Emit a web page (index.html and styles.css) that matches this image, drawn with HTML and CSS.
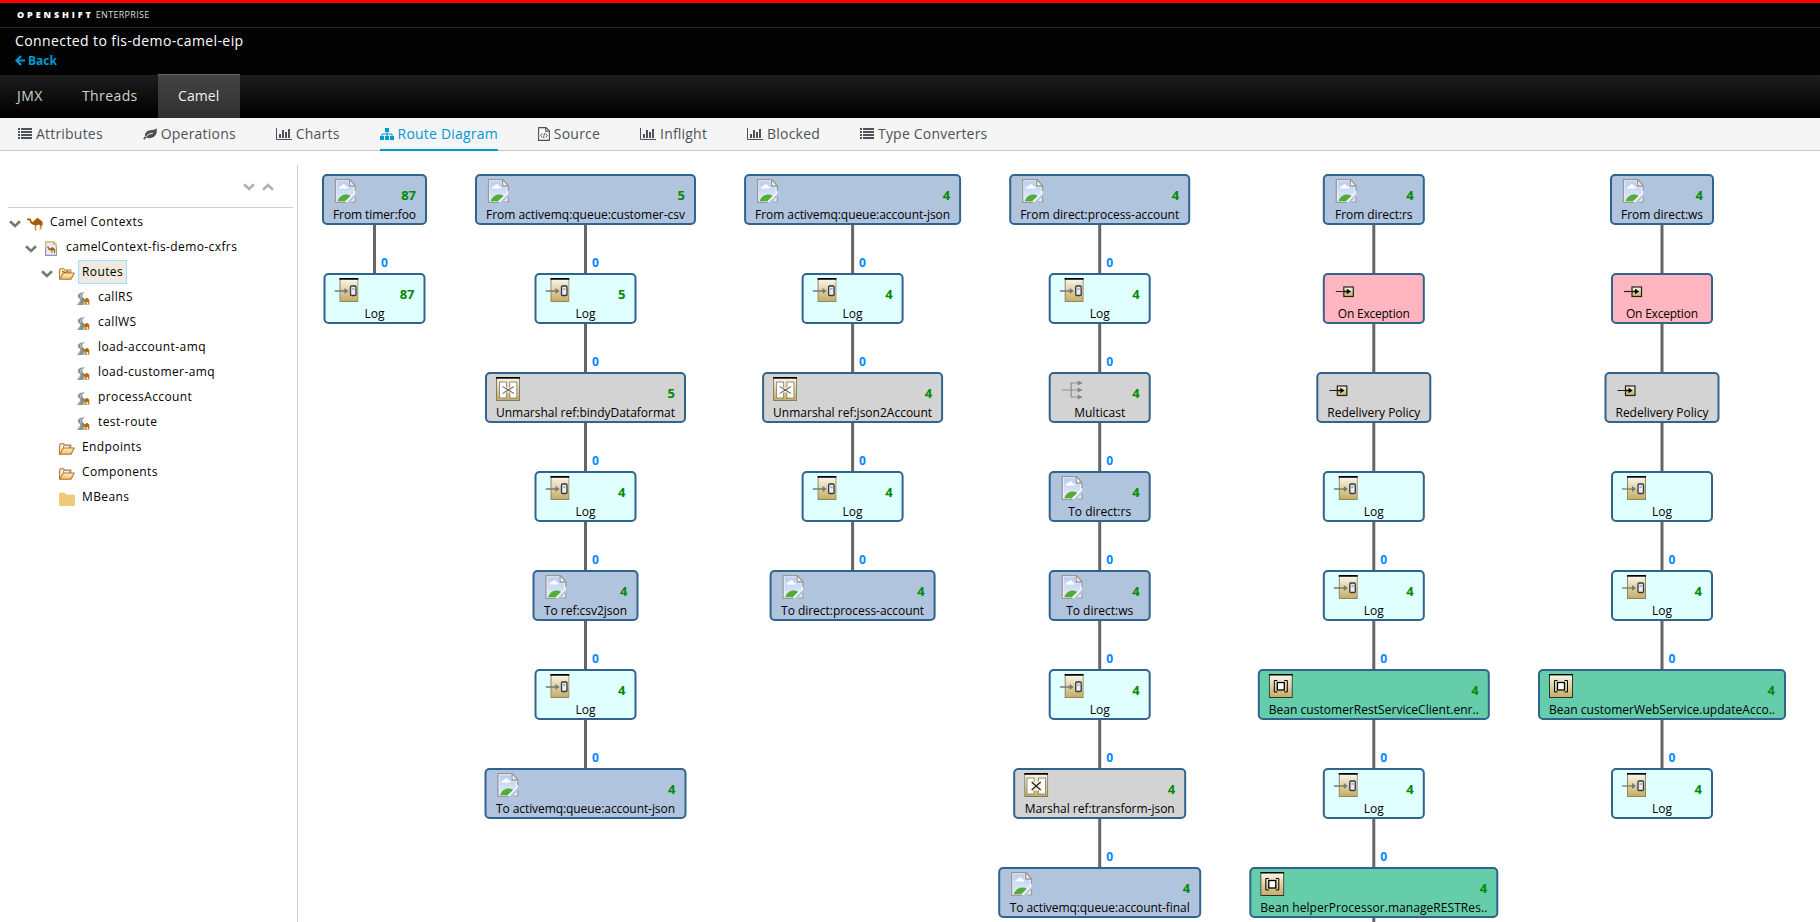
FILE: index.html
```html
<!DOCTYPE html>
<html lang="en">
<head>
<meta charset="utf-8">
<title>Camel Route Diagram</title>
<link rel="stylesheet" href="styles.css">
</head>
<body>
<svg class="defs" width="0" height="0" aria-hidden="true">
  <defs>
    <linearGradient id="gold" x1="0" y1="0" x2="0" y2="1"><stop offset="0" stop-color="#fbf8ee"/><stop offset="1" stop-color="#c5ac62"/></linearGradient>
    <linearGradient id="sky" x1="0" y1="0" x2="0" y2="1"><stop offset="0" stop-color="#b9cdf2"/><stop offset="1" stop-color="#e3ecfb"/></linearGradient>
    <linearGradient id="fold" x1="0" y1="0" x2="0" y2="1"><stop offset="0" stop-color="#fff0c4"/><stop offset="1" stop-color="#f0bd62"/></linearGradient>
    <symbol id="i-broken" viewBox="0 0 24 24">
      <path d="M2.500 .7H17l5.300 6v8L14 23.300H2.500z" fill="#f2f4f9"/>
      <path d="M4 2.200h11.500v6h5v6L12 22H4z" fill="url(#sky)"/>
      <path d="M6 9.500c0-2 1.500-2.500 2.500-2C9 4.500 12.500 4.500 13 7.500c1.800-.2 2.300 1 2 2z" fill="#fff"/>
      <path d="M4.500 22.300c1.500-4.500 5-7 9-6.800 2.500.2 4 1.500 4 1.500l-5.500 5.300z" fill="#53ac35"/>
      <path d="M22.300 12V6.700L17 .7H2.500v22.600H13M16.500 1v6h5.800" fill="none" stroke="#999" stroke-width="1.300"/>
      <path d="M22.600 17v6.300h-5.800z" fill="#e6eaf2"/><path d="M22.300 17.500v5.500h-5" fill="none" stroke="#999" stroke-width="1.200"/>
    </symbol>
    <symbol id="i-log" viewBox="0 0 24 24">
      <rect x="5.500" y=".5" width="18" height="23" fill="url(#gold)" stroke="#8f8663"/>
      <path d="M5 .8h19" stroke="#000" stroke-width="1.800"/>
      <path d="M0 13h11" stroke="#777" stroke-width="1.300"/><path d="M10 10l4 3-4 3z" fill="#777"/>
      <rect x="16" y="8" width="5.500" height="9.500" rx="1" fill="#e8ecf6" stroke="#383838" stroke-width="1.300"/>
      <path d="M17.500 11h2.500" stroke="#7384b4"/>
    </symbol>
    <symbol id="i-unmarshal" viewBox="0 0 24 24">
      <rect x=".5" y=".5" width="23" height="23" fill="url(#gold)" stroke="#857c60"/><path d="M0 .8h24" stroke="#000" stroke-width="1.800"/>
      <rect x="3.500" y="5" width="7" height="16" fill="#fff" stroke="#8a8470" stroke-width=".9"/>
      <rect x="13.800" y="5" width="7" height="16" fill="#fff" stroke="#8a8470" stroke-width=".9"/>
      <path d="M9 10.500h6.500v5H9z" fill="#f5eed6"/>
      <path d="M6.500 9.500l11.500 7M18 9.500l-11.500 7" stroke="#444" stroke-width=".9"/>
    </symbol>
    <symbol id="i-marshal" viewBox="0 0 24 24">
      <rect x=".5" y=".5" width="23" height="23" fill="url(#gold)" stroke="#857c60"/><path d="M0 .8h24" stroke="#000" stroke-width="1.800"/>
      <rect x="2.800" y="5" width="7" height="16" fill="#fff" stroke="#8a8470" stroke-width=".9"/>
      <rect x="14.300" y="5" width="7" height="16" fill="#fff" stroke="#8a8470" stroke-width=".9"/>
      <path d="M7 8.500h10v9H7z" fill="#f8f3e2"/>
      <path d="M7.500 9l9 8M16.500 9l-9 8" stroke="#222" stroke-width="1.300"/>
    </symbol>
    <symbol id="i-multicast" viewBox="0 0 24 24">
      <path d="M2 13h18M11.500 6v14M11 6h8M11 20h8" fill="none" stroke="#8f8f8f" stroke-width="1.200"/>
      <path d="M18 3.500l5 2.500-5 2.500zM18 10.500l5 2.500-5 2.500zM18 17.500l5 2.500-5 2.500z" fill="#858585"/>
    </symbol>
    <symbol id="i-generic" viewBox="0 0 24 24">
      <path d="M2 13.500h9" stroke="#222" stroke-width="1.200"/>
      <rect x="10" y="9" width="9.500" height="9.500" fill="url(#gold)" stroke="#222" stroke-width="1.200"/>
      <path d="M10 13.500h4" stroke="#111" stroke-width="1.300"/><path d="M13 10.700l4.300 2.800-4.300 2.800z" fill="#000"/>
    </symbol>
    <symbol id="i-bean" viewBox="0 0 24 24">
      <rect x=".5" y=".5" width="23" height="23" fill="url(#gold)" stroke="#27352c"/><path d="M0 .7h24" stroke="#000" stroke-width="1.400"/>
      <rect x="8.500" y="8.500" width="7" height="7.500" fill="#fff" stroke="#000" stroke-width="1.300"/>
      <path d="M8.500 6.500h-3v11.500h3M15.500 6.500h3v11.500h-3" fill="none" stroke="#000" stroke-width="1"/>
    </symbol>
    <symbol id="i-camel" viewBox="0 0 16 14">
      <path d="M0 1.800L2.200 1.200l2 1 .3 2L6 5l1-1.500L8.300 2.700 9.200 2l1.300-1.500L12 2l1.800 1.200L15.600 5v4.500l-.8-2-.4 2.200v2.800h-.9L13.300 9l-1-1.200-2.500.2-.6 1.200v4.300h-.9V8.500L5 7.200 3.200 5.800 2.700 3.500 0 3z" fill="#a45c08"/>
      <path d="M8 9v3M12.900 9v4" stroke="#d89e50" stroke-width=".6"/>
    </symbol>
    <symbol id="i-context" viewBox="0 0 12 15">
      <path d="M.6.6h7.600l3.200 3.200v10.600H.6z" fill="#e9ebf6" stroke="#9a95a1" stroke-width="1.200"/>
      <path d="M.6 6V.6h7.600l3.200 3.200V6" fill="none" stroke="#dcbd6f" stroke-width="1.200"/><path d="M8 .6v3.400h3.400z" fill="#dcbd6f"/>
      <path d="M1.500 5.500h2l1 1.800 1 .3L7.300 6l2.700 2v4H9V9.500L7.500 9v3h-1V9.500L3.500 9 3 7z" fill="#a45c08"/>
    </symbol>
    <symbol id="i-folder-open" viewBox="0 0 16 12">
      <path d="M.6 11.200V2.200l1-1.500h3l1 1.300h6.200v3" fill="#fff2cf" stroke="#b0762a" stroke-width="1.100"/>
      <path d="M4.500 5V2.500h6V5" fill="#f1f1ef" stroke="#8c8a86" stroke-width=".8"/>
      <path d="M.8 11.200L4.300 5h11L12 11.200z" fill="url(#fold)" stroke="#b0762a" stroke-width="1.100" stroke-linejoin="round"/>
    </symbol>
    <symbol id="i-folder-routes" viewBox="0 0 16 12">
      <path d="M.6 11.200V2.200l1-1.500h3l1 1.300h6.200v3" fill="#fff2cf" stroke="#b0762a" stroke-width="1.100"/>
      <path d="M3 3.500l2 .3 1.500 1 2-1.500 2 1.500" fill="none" stroke="#b0660c" stroke-width="1.400"/>
      <path d="M.8 11.200L4.300 5h11L12 11.200z" fill="url(#fold)" stroke="#b0762a" stroke-width="1.100" stroke-linejoin="round"/>
    </symbol>
    <symbol id="i-route" viewBox="0 0 13 13">
      <path d="M0 13L4 7.500 7 8l5 5z" fill="#d0c496"/>
      <path d="M8.500 .2L4 .8C.6 2.500.4 5 3.500 7 4.700 8.500 3.500 10.500 1.500 13H6c2.500-3 2.500-5.500.5-7.500C5.300 4 5.500 2 8.500.2z" fill="#869392"/>
      <path d="M6.200 1C3 3 4 4.500 5 6.500" fill="none" stroke="#dfe6e5" stroke-width=".7"/>
      <path d="M5 6l1.700.3L8 7.500l1-.8 1.500-1 2.300 2.100v5h-.9l-.4-2.800-1.500.2-.2 2.600H9V10L7 9l-.5-1.700z" fill="#b2690f"/>
    </symbol>
    <symbol id="i-chev" viewBox="0 0 12 8"><path d="M1 1.300L6 6l5-4.700" fill="none" stroke="currentColor" stroke-width="2.600"/></symbol>
    <symbol id="i-list" viewBox="0 0 14 11"><path d="M0 1h2M0 4h2M0 7h2M0 10h2M3 1h11M3 4h11M3 7h11M3 10h11" stroke="currentColor" stroke-width="2"/></symbol>
    <symbol id="i-leaf" viewBox="0 0 14 12"><path d="M13.600.3c.9 4-.6 8.700-5.600 9.700-2 .4-3.500-.2-4.500-.5L1.300 11.700.2 10.500 2 8.500C1.500 5 4 2.600 7 2.200c2.500-.3 5.200.1 6.600-1.900z" fill="currentColor"/><path d="M2.700 9C4.500 6.700 6.800 5.500 9.800 5.200" fill="none" stroke="#f6f6f6" stroke-width="1"/></symbol>
    <symbol id="i-chart" viewBox="0 0 16 12"><path d="M.5 0v11.500H16" fill="none" stroke="currentColor"/><path d="M4 6v4M7 2v8M10 4v6M13 1v9" stroke="currentColor" stroke-width="2"/></symbol>
    <symbol id="i-sitemap" viewBox="0 0 14 12"><path d="M5 0h4v4H5zM0 8h4v4H0zM5 8h4v4H5zM10 8h4v4h-4z" fill="currentColor"/><path d="M7 4v4M2 8V6h10v2" fill="none" stroke="currentColor"/></symbol>
    <symbol id="i-source" viewBox="0 0 12 14"><path d="M.6.6h7.400L11.400 4v9.400H.6zM7.800.6v3.600h3.600" fill="none" stroke="currentColor" stroke-width="1.100"/><path d="M4.300 6.500L2.700 8.500l1.600 2M7.700 6.500l1.600 2-1.600 2M6.500 6l-1 5" fill="none" stroke="currentColor" stroke-width=".9"/></symbol>
    <symbol id="i-back" viewBox="0 0 10 11"><path d="M6 1L1.500 5.500 6 10M2 5.500h8" fill="none" stroke="currentColor" stroke-width="2.200"/></symbol>
  </defs>
</svg>

<header class="masthead">
  <div class="brand"><b>OPENSHIFT</b><span>ENTERPRISE</span></div>
  <div class="connection">
    <div class="connected">Connected to fis-demo-camel-eip</div>
    <a class="back"><svg width="10" height="11"><use href="#i-back"/></svg><span>Back</span></a>
  </div>
</header>
<nav class="tabs">
  <a class="tab">JMX</a><a class="tab threads">Threads</a><a class="tab active">Camel</a>
</nav>
<nav class="subnav">
  <a class="sub"><svg width="14" height="11"><use href="#i-list"/></svg><span>Attributes</span></a>
  <a class="sub"><svg width="14" height="12"><use href="#i-leaf"/></svg><span>Operations</span></a>
  <a class="sub"><svg width="16" height="12"><use href="#i-chart"/></svg><span>Charts</span></a>
  <a class="sub current"><svg width="14" height="12"><use href="#i-sitemap"/></svg><span>Route Diagram</span></a>
  <a class="sub"><svg width="12" height="14"><use href="#i-source"/></svg><span>Source</span></a>
  <a class="sub"><svg width="16" height="12"><use href="#i-chart"/></svg><span>Inflight</span></a>
  <a class="sub"><svg width="16" height="12"><use href="#i-chart"/></svg><span>Blocked</span></a>
  <a class="sub"><svg width="14" height="11"><use href="#i-list"/></svg><span>Type Converters</span></a>
</nav>

<div class="workspace">
  <aside class="sidebar">
    <div class="tree-tools"><svg width="12" height="8"><use href="#i-chev"/></svg><svg class="up" width="12" height="8"><use href="#i-chev"/></svg></div>
    <ul class="tree">
      <li class="l0"><svg class="chev" width="12" height="8"><use href="#i-chev"/></svg><svg class="ico" width="16" height="14"><use href="#i-camel"/></svg><span>Camel Contexts</span></li>
      <li class="l1"><svg class="chev" width="12" height="8"><use href="#i-chev"/></svg><svg class="ico" width="16" height="15"><use href="#i-context"/></svg><span>camelContext-fis-demo-cxfrs</span></li>
      <li class="l2"><svg class="chev" width="12" height="8"><use href="#i-chev"/></svg><svg class="ico" width="16" height="12"><use href="#i-folder-routes"/></svg><span class="selected">Routes</span></li>
      <li class="l3"><i class="chev"></i><svg class="ico" width="16" height="13"><use href="#i-route"/></svg><span>callRS</span></li>
      <li class="l3"><i class="chev"></i><svg class="ico" width="16" height="13"><use href="#i-route"/></svg><span>callWS</span></li>
      <li class="l3"><i class="chev"></i><svg class="ico" width="16" height="13"><use href="#i-route"/></svg><span>load-account-amq</span></li>
      <li class="l3"><i class="chev"></i><svg class="ico" width="16" height="13"><use href="#i-route"/></svg><span>load-customer-amq</span></li>
      <li class="l3"><i class="chev"></i><svg class="ico" width="16" height="13"><use href="#i-route"/></svg><span>processAccount</span></li>
      <li class="l3"><i class="chev"></i><svg class="ico" width="16" height="13"><use href="#i-route"/></svg><span>test-route</span></li>
      <li class="l2"><i class="chev"></i><svg class="ico" width="16" height="12"><use href="#i-folder-open"/></svg><span>Endpoints</span></li>
      <li class="l2"><i class="chev"></i><svg class="ico" width="16" height="12"><use href="#i-folder-open"/></svg><span>Components</span></li>
      <li class="l2"><i class="chev"></i><svg class="ico" width="16" height="14" viewBox="0 0 16 14"><path d="M0 2.500Q0 .5 2 .5h3.500L7 2.500h7.500q1.500 0 1.500 1.500v8.500q0 1.500-1.500 1.500H1.500Q0 14 0 12.500z" fill="#eec97c"/></svg><span>MBeans</span></li>
    </ul>
  </aside>
  <main class="canvas" id="canvas"></main>
</div>
<script src="diagram.js"></script>
</body>
</html>
```
FILE: diagram.js
```js
// Each route: centre x, then nodes [type, icon, width, label, label width, count].
// A trailing "plain" marks a node whose incoming edge carries no inflight count.
const routes = [
  { x: 374.5, nodes: [
    ['endpoint', 'broken', 105, 'From timer:foo', 83, '87'],
    ['log', 'log', 102, 'Log', 20, '87'] ] },
  { x: 585.5, nodes: [
    ['endpoint', 'broken', 221, 'From activemq:queue:customer-csv', 199, '5'],
    ['log', 'log', 102, 'Log', 20, '5'],
    ['step', 'unmarshal', 201, 'Unmarshal ref:bindyDataformat', 179, '5'],
    ['log', 'log', 102, 'Log', 20, '4'],
    ['endpoint', 'broken', 106, 'To ref:csv2json', 83, '4'],
    ['log', 'log', 102, 'Log', 20, '4'],
    ['endpoint', 'broken', 202, 'To activemq:queue:account-json', 179, '4'] ] },
  { x: 852.6, nodes: [
    ['endpoint', 'broken', 217, 'From activemq:queue:account-json', 195, '4'],
    ['log', 'log', 102, 'Log', 20, '4'],
    ['step', 'unmarshal', 181, 'Unmarshal ref:json2Account', 159, '4'],
    ['log', 'log', 102, 'Log', 20, '4'],
    ['endpoint', 'broken', 166, 'To direct:process-account', 143, '4'] ] },
  { x: 1099.7, nodes: [
    ['endpoint', 'broken', 181, 'From direct:process-account', 159, '4'],
    ['log', 'log', 102, 'Log', 20, '4'],
    ['step', 'multicast', 102, 'Multicast', 51, '4'],
    ['endpoint', 'broken', 102, 'To direct:rs', 63, '4'],
    ['endpoint', 'broken', 102, 'To direct:ws', 67, '4'],
    ['log', 'log', 102, 'Log', 20, '4'],
    ['step', 'marshal', 173, 'Marshal ref:transform-json', 150, '4'],
    ['endpoint', 'broken', 203, 'To activemq:queue:account-final', 180, '4'] ] },
  { x: 1373.8, continues: true, nodes: [
    ['endpoint', 'broken', 102, 'From direct:rs', 77.5, '4'],
    ['exception', 'generic', 102, 'On Exception', 72, '', 'plain'],
    ['step', 'generic', 115, 'Redelivery Policy', 93, '', 'plain'],
    ['log', 'log', 102, 'Log', 20, '', 'plain'],
    ['log', 'log', 102, 'Log', 20, '4'],
    ['bean', 'bean', 232, 'Bean customerRestServiceClient.enr..', 210, '4'],
    ['log', 'log', 102, 'Log', 20, '4'],
    ['bean', 'bean', 249, 'Bean helperProcessor.manageRESTRes..', 227, '4'] ] },
  { x: 1662, nodes: [
    ['endpoint', 'broken', 104, 'From direct:ws', 82, '4'],
    ['exception', 'generic', 102, 'On Exception', 72, '', 'plain'],
    ['step', 'generic', 115, 'Redelivery Policy', 93, '', 'plain'],
    ['log', 'log', 102, 'Log', 20, '', 'plain'],
    ['log', 'log', 102, 'Log', 20, '4'],
    ['bean', 'bean', 248, 'Bean customerWebService.updateAcco..', 226, '4'],
    ['log', 'log', 102, 'Log', 20, '4'] ] }
];
const TOP = 174, HEIGHT = 51, PITCH = 99;
let out = '<svg class="diagram" width="1522" height="771" viewBox="298 151 1522 771">';
for (const route of routes) {
  const rows = route.nodes.length;
  const end = TOP + (rows - 1) * PITCH + (route.continues ? PITCH : 10);
  out += `<line class="edge" x1="${route.x}" x2="${route.x}" y1="${TOP + 20}" y2="${end}"/>`;
  route.nodes.forEach(([type, icon, w, label, labelWidth, count, plain], row) => {
    const y = TOP + row * PITCH;
    if (row > 0 && !plain) out += `<text class="inflight" x="${route.x + 6.5}" y="${y - 6}">0</text>`;
    out += `<g transform="translate(${route.x - w / 2} ${y})">
      <rect class="node ${type}" x="1" y="1" width="${w - 2}" height="${HEIGHT - 2}" rx="4"/>
      <use href="#i-${icon}" x="11" y="5" width="24" height="24"/>
      <text class="count" x="${w - 11}" y="26">${count}</text>
      <text class="label" x="${w / 2}" y="45" textLength="${labelWidth}">${label}</text></g>`;
  });
}
document.getElementById('canvas').innerHTML = out + '</svg>';
```
FILE: styles.css
```css
* { box-sizing: border-box; }
body { margin: 0; height: 922px; overflow: hidden; background: #fff; color: #000; font-family: "Open Sans", "Noto Sans", sans-serif; font-size: 12px; }
.defs { display: block; position: absolute; }
.masthead { height: 75px; border-top: 3px solid #f00; background: #030303; color: #fff; }
.brand { height: 25px; border-bottom: 1px solid #292929; padding-left: 17px; display: flex; gap: 2px; font-size: 9px; line-height: 23px; }
.brand b { font-weight: 800; letter-spacing: 2.9px; }
.brand span { letter-spacing: .3px; color: #ddd; }
.connection { padding: 2px 0 0 15px; }
.connected { font-size: 14px; line-height: 22px; letter-spacing: .4px; }
.back { display: flex; align-items: center; gap: 3px; color: #0099d3; font-weight: 700; line-height: 17px; }
.tabs { height: 43px; display: flex; background: linear-gradient(#1d1d1d, #000 97%); }
.tab { width: 62px; padding-left: 17px; font-size: 14px; line-height: 42px; letter-spacing: .4px; color: #d1d1d1; }
.threads { width: 96px; padding-left: 20px; }
.tab.active { width: 82px; height: 44px; margin-top: -1px; padding-left: 20px; border-top: 1px solid #666; background: linear-gradient(#434343, #303030); color: #f1f1f1; letter-spacing: .1px; }
.subnav { height: 33px; padding-left: 18px; display: flex; gap: 40px; background: #f5f5f5; border-bottom: 1px solid #c9c9c9; color: #4d5258; }
.sub { height: 33px; padding-bottom: 2px; display: flex; align-items: center; gap: 4px; font-size: 14px; letter-spacing: .2px; white-space: nowrap; }
.sub span { line-height: 29px; padding-bottom: 1px; }
.current { color: #0099d3; border-bottom: 2px solid #0099d3; padding-bottom: 0; }
.workspace { height: 771px; display: flex; }
.sidebar { width: 298px; flex: none; margin-top: 14px; border-right: 1px solid #d1d1d1; padding-left: 8px; }
.tree-tools { width: 285px; height: 43px; padding: 18px 19px 0 0; border-bottom: 1px solid #d1d1d1; display: flex; justify-content: flex-end; gap: 7px; color: #b0b0b0; }
.up { transform: scaleY(-1); }
.tree { list-style: none; margin: 1px 0 0; padding: 0; }
.tree li { height: 25px; display: flex; align-items: center; letter-spacing: .4px; white-space: nowrap; }
.tree .chev { width: 12px; margin: 5px 7px 0 1px; color: #6d8070; flex: none; }
.tree .ico { margin: 4px 3px 0 -1px; flex: none; }
.tree span { height: 24px; line-height: 22px; padding: 0 3px; border: 1px solid transparent; }
.tree .selected { border-color: #99defd; background: #eeeade; }
.l1 { padding-left: 16px; }
.l2 { padding-left: 32px; }
.l3 { padding-left: 48px; }
.canvas { flex: none; width: 1522px; height: 771px; overflow: hidden; }
.diagram { display: block; }
.edge { stroke: #666; stroke-width: 3px; }
.node { stroke: #31648c; stroke-width: 2px; }
.endpoint { fill: #b0c4de; }
.log { fill: #e0ffff; }
.step { fill: #d3d3d3; }
.exception { fill: #ffb6c1; }
.bean { fill: #66cdaa; }
.label { font-size: 12px; text-anchor: middle; fill: #000; }
.count { font-size: 13px; font-weight: 700; text-anchor: end; fill: #008a00; }
.inflight { font-size: 12px; font-weight: 700; fill: #0088ff; }
```
